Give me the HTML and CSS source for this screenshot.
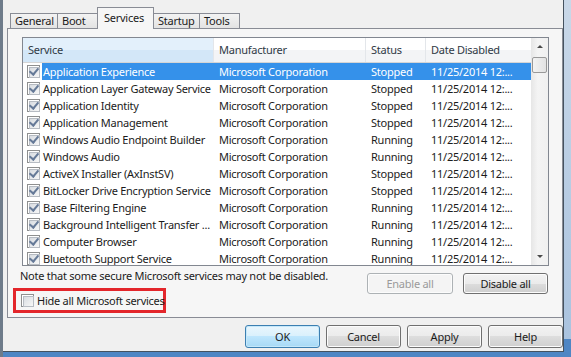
FILE: index.html
```html
<!DOCTYPE html>
<html lang="en">
<head>
    <meta charset="UTF-8">
    <title>System Configuration</title>
    <link rel="stylesheet" href="styles.css">
</head>
<body>
    <div class="window">
        <div class="dialog">
            <div class="tabs">
                <div class="tab tab-general">General</div>
                <div class="tab tab-boot">Boot</div>
                <div class="tab tab-services active">Services</div>
                <div class="tab tab-startup">Startup</div>
                <div class="tab tab-tools">Tools</div>
            </div>

            <div class="panel">
                <div class="list">
                    <div class="list-main">
                        <div class="list-header">
                            <div class="hcell sorted">Service</div>
                            <div class="hcell">Manufacturer</div>
                            <div class="hcell">Status</div>
                            <div class="hcell">Date Disabled</div>
                        </div>
                        <div class="rows">
                            <div class="row selected"><span class="check"></span><span class="cell">Application Experience</span><span class="cell">Microsoft Corporation</span><span class="cell">Stopped</span><span class="cell">11/25/2014 12:...</span></div>
                            <div class="row"><span class="check"></span><span class="cell">Application Layer Gateway Service</span><span class="cell">Microsoft Corporation</span><span class="cell">Stopped</span><span class="cell">11/25/2014 12:...</span></div>
                            <div class="row"><span class="check"></span><span class="cell">Application Identity</span><span class="cell">Microsoft Corporation</span><span class="cell">Stopped</span><span class="cell">11/25/2014 12:...</span></div>
                            <div class="row"><span class="check"></span><span class="cell">Application Management</span><span class="cell">Microsoft Corporation</span><span class="cell">Stopped</span><span class="cell">11/25/2014 12:...</span></div>
                            <div class="row"><span class="check"></span><span class="cell">Windows Audio Endpoint Builder</span><span class="cell">Microsoft Corporation</span><span class="cell">Running</span><span class="cell">11/25/2014 12:...</span></div>
                            <div class="row"><span class="check"></span><span class="cell">Windows Audio</span><span class="cell">Microsoft Corporation</span><span class="cell">Running</span><span class="cell">11/25/2014 12:...</span></div>
                            <div class="row"><span class="check"></span><span class="cell">ActiveX Installer (AxInstSV)</span><span class="cell">Microsoft Corporation</span><span class="cell">Stopped</span><span class="cell">11/25/2014 12:...</span></div>
                            <div class="row"><span class="check"></span><span class="cell">BitLocker Drive Encryption Service</span><span class="cell">Microsoft Corporation</span><span class="cell">Stopped</span><span class="cell">11/25/2014 12:...</span></div>
                            <div class="row"><span class="check"></span><span class="cell">Base Filtering Engine</span><span class="cell">Microsoft Corporation</span><span class="cell">Running</span><span class="cell">11/25/2014 12:...</span></div>
                            <div class="row"><span class="check"></span><span class="cell">Background Intelligent Transfer ...</span><span class="cell">Microsoft Corporation</span><span class="cell">Running</span><span class="cell">11/25/2014 12:...</span></div>
                            <div class="row"><span class="check"></span><span class="cell">Computer Browser</span><span class="cell">Microsoft Corporation</span><span class="cell">Running</span><span class="cell">11/25/2014 12:...</span></div>
                            <div class="row"><span class="check"></span><span class="cell">Bluetooth Support Service</span><span class="cell">Microsoft Corporation</span><span class="cell">Running</span><span class="cell">11/25/2014 12:...</span></div>
                        </div>
                    </div>
                    <div class="scrollbar">
                        <div class="sb-button"><span class="arrow-up"></span></div>
                        <div class="sb-thumb"></div>
                        <div class="sb-track"></div>
                        <div class="sb-button"><span class="arrow-down"></span></div>
                    </div>
                </div>

                <div class="actions">
                    <div class="actions-left">
                        <p class="note">Note that some secure Microsoft services may not be disabled.</p>
                        <label class="hide-ms"><span class="check empty"></span>Hide all Microsoft services</label>
                    </div>
                    <div class="actions-right">
                        <button class="btn btn-enable" disabled>Enable all</button>
                        <button class="btn btn-disable">Disable all</button>
                    </div>
                </div>
            </div>

            <div class="footer">
                <button class="btn btn-ok">OK</button>
                <button class="btn btn-cancel">Cancel</button>
                <button class="btn btn-apply">Apply</button>
                <button class="btn btn-help">Help</button>
            </div>
        </div>
    </div>
</body>
</html>
```

FILE: styles.css
```css
* {
    box-sizing: border-box;
    margin: 0;
    padding: 0;
}

body {
    font-family: "Noto Sans", "Open Sans", sans-serif;
    font-size: 11px;
    letter-spacing: -0.25px;
    color: #1b1b1b;
    background: #f0f0f0;
}

/* window frame */
.window {
    width: 571px;
    height: 357px;
    border-left: 3px solid #6e7b8a;
    padding: 0 7px 5px 0;
    background: linear-gradient(180deg, #c9d8e8, #aac3df 95%, #4f86c4 95%);
}

.dialog {
    height: 100%;
    background: #f0f0f0;
    border-right: 1px solid #45525f;
    border-bottom: 1px solid #45525f;
    display: flex;
    flex-direction: column;
}

/* tabs */
.tabs {
    display: flex;
    align-items: flex-end;
    height: 28px;
    padding-left: 7px;
}

.tab {
    height: 15px;
    border: 1px solid #898c95;
    border-bottom: none;
    margin-right: -1px;
    padding-left: 4px;
    line-height: 13px;
    background: linear-gradient(#f3f3f3, #e3e3e3);
    color: #1b1b1b;
}

.tab-general { width: 48px; }
.tab-boot { width: 41px; }
.tab-startup { width: 47px; }
.tab-tools { width: 41px; }

.tab.active {
    width: 57px;
    height: 22px;
    margin-bottom: -1px;
    padding-left: 6px;
    padding-top: 3px;
    background: #f6f6f6;
    position: relative;
    z-index: 1;
}

/* tab page */
.panel {
    margin-left: 4px;
    border: 1px solid #898c95;
    background: #f6f6f6;
    padding: 8px 13px 4px 12px;
}

.list {
    display: flex;
    margin-left: 2px;
    height: 229px;
    border: 1px solid #828790;
    background: #fff;
}

.list-main {
    width: 508px;
}

.list-header {
    display: grid;
    grid-template-columns: 190px 152px 60px 106px;
    height: 25px;
    border-bottom: 1px solid #d5d5d5;
}

.hcell {
    padding-left: 5px;
    line-height: 24px;
    color: #303a46;
    background: linear-gradient(#ffffff 50%, #f3f4f6 50%);
    border-left: 1px solid #e3e6ea;
}

.hcell.sorted {
    border-left: none;
    background: linear-gradient(#e3f0fb 50%, #d3e7f8 50%);
}

.rows {
    height: 202px;
    overflow: hidden;
}

.row {
    display: grid;
    grid-template-columns: 19px 171px 152px 60px 106px;
    height: 17px;
    line-height: 17px;
    align-items: center;
}

.cell {
    white-space: nowrap;
    overflow: hidden;
    padding-left: 6px;
}

.row .cell:nth-child(2) {
    padding-left: 1px;
}

.row.selected .cell {
    background: #3591ea;
    color: #fff;
}

/* checkbox */
.check {
    position: relative;
    width: 13px;
    height: 13px;
    margin-left: 4px;
    border: 1px solid #8e8f8f;
    background: #fff;
    display: inline-block;
    flex-shrink: 0;
}

.check::before {
    content: "";
    position: absolute;
    left: 1px;
    top: 1px;
    width: 9px;
    height: 9px;
    border: 1px solid #b7bcc3;
    background: linear-gradient(135deg, #d8dce1, #f7f7f7);
}

.check::after {
    content: "";
    position: absolute;
    left: 3px;
    top: 0px;
    width: 4px;
    height: 7px;
    border: solid #667a98;
    border-width: 0 2px 2px 0;
    transform: rotate(40deg);
}

.check.empty::after {
    display: none;
}

/* scrollbar */
.scrollbar {
    width: 17px;
    display: flex;
    flex-direction: column;
    background: linear-gradient(90deg, #e6e6e6, #f4f4f4 40%, #f0f0f0);
}

.sb-button {
    height: 17px;
    display: flex;
    align-items: center;
    justify-content: center;
}

.arrow-up {
    border-left: 3px solid transparent;
    border-right: 3px solid transparent;
    border-bottom: 3px solid #4a4a4a;
}

.arrow-down {
    border-left: 3px solid transparent;
    border-right: 3px solid transparent;
    border-top: 3px solid #4a4a4a;
}

.sb-thumb {
    height: 16px;
    margin: 2px 1px 0 1px;
    border: 1px solid #999;
    border-radius: 2px;
    background: linear-gradient(90deg, #f3f3f3, #e2e2e2);
}

.sb-track {
    flex: 1;
}

/* actions under the list */
.actions {
    display: flex;
    justify-content: space-between;
    margin-top: 2px;
    margin-right: 1px;
}

.note {
    line-height: 16px;
}

.hide-ms {
    display: flex;
    align-items: center;
    gap: 3px;
    width: 153px;
    height: 25px;
    margin-top: 4px;
    margin-left: -7px;
    padding-left: 5px;
    border: 3px solid #e3262b;
    white-space: nowrap;
}

.hide-ms .check {
    margin-left: 0;
}

.actions-right {
    display: flex;
    gap: 10px;
    margin-top: 5px;
}

/* buttons */
.btn {
    font-family: inherit;
    font-size: 11px;
    letter-spacing: inherit;
    color: #1b1b1b;
    height: 21px;
    border: 1px solid #707070;
    border-radius: 3px;
    background: linear-gradient(#f2f2f2, #ebebeb 50%, #dddddd 50%, #cfcfcf);
    box-shadow: inset 0 0 0 1px #fcfcfc;
}

.btn-enable {
    width: 86px;
    color: #9a9a9a;
    border-color: #adb2b5;
    background: #f4f4f4;
}

.btn-disable {
    width: 85px;
}

.footer {
    display: flex;
    justify-content: flex-end;
    gap: 6px;
    margin-top: 7px;
}

.footer .btn {
    width: 75px;
    height: 23px;
}

.btn-ok {
    border-color: #3c7fb1;
    background: linear-gradient(#eaf6fd, #d9f0fc 50%, #bee6fd 50%, #a7d9f5);
    box-shadow: inset 0 0 0 1px #c5e8fa;
}
```
